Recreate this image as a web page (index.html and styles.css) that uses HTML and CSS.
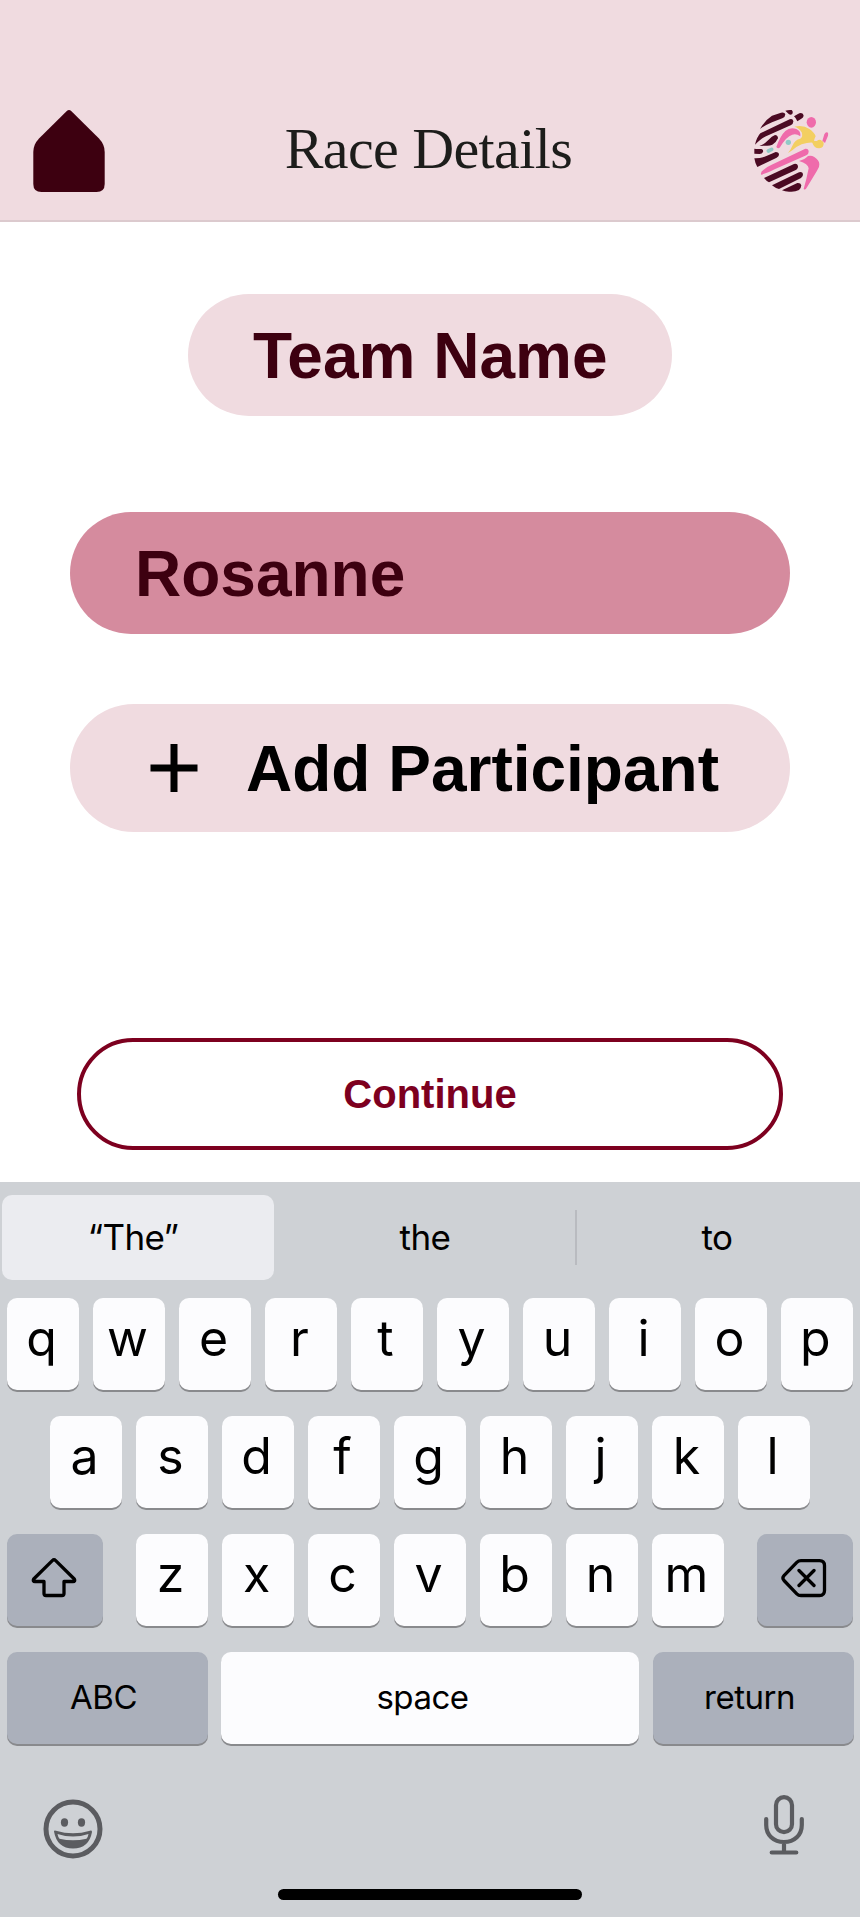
FILE: index.html
```html
<!DOCTYPE html>
<html lang="en">
<head>
<meta charset="utf-8">
<title>Race Details</title>
<link rel="stylesheet" href="styles.css">
</head>
<body>
<header class="header">
  <svg class="home" viewBox="0 0 72 82"><path d="M33.8 .9Q36 -.8 38.2 .9L66 28.500Q71.700 34.500 71.700 42V74Q71.700 82 63.500 82H8.500Q.3 82 .3 74V42Q.3 34.500 6 28.500Z" fill="#3d0010"/></svg>
  <h1 class="title">Race Details</h1>
  <svg class="logo" viewBox="66 54 234 258">
    <g fill="#4b0a23">
      <path d="M166 62Q175 59 185 60Q191 66 186 73Q179 77 173 69Z"/>
      <path d="M90 117Q105 90 126 77L153 68Q164 66 166 73Q166 81 157 85L126 97Q105 106 90 117Z"/>
      <path d="M75 164Q80 142 91 130L179 88Q188 85 190 93Q191 101 182 106L108 139Q95 144 75 164Z"/>
      <path d="M192 79L208 70Q220 67 221 77Q220 83 214 86L202 94Q198 84 192 79Z"/>
      <path d="M88 168Q103 163 115 150Q126 138 135 135Q144 136 144 145Q139 157 127 164Q118 168 108 167Z"/>
      <path d="M73 176Q80 178 94 177Q101 179 99 186Q96 192 89 192L73 191Z"/>
      <path d="M73 205Q93 206 111 197L137 186Q147 186 147 194Q147 199 140 203L82 231Q75 219 73 205Z"/>
      <path d="M102 264L192 222Q202 220 204 228Q205 235 199 239L117 277Q109 273 102 264Z"/>
      <path d="M126 286L207 247Q217 244 219 252Q220 259 213 264L147 297Q135 294 126 286Z"/>
      <path d="M156 301L202 279Q212 278 214 286Q214 293 207 300Q194 307 177 305Q165 305 156 301Z"/>
    </g>
    <path d="M115 183L125 178" stroke="#91cac7" stroke-width="11" stroke-linecap="round"/>
    <circle cx="175" cy="157" r="8" fill="#91cac7"/>
    <g fill="#f3cf61">
      <path d="M193 110Q220 104 238 117Q254 128 257 139Q253 146 252 152Q256 154 261 153Q265 148 272 150Q279 153 281 158Q282 173 268 175Q253 176 247 158Q235 157 215 163Q200 169 187 181L174 189Q182 180 188 166Q194 149 211 146Q220 141 215 127Q207 113 193 110Z"/>
    </g>
    <g fill="#ef6bab">
      <ellipse cx="244" cy="97" rx="14" ry="16"/>
      <path d="M139 171Q151 137 166 123Q180 110 199 117Q213 123 211 139Q199 130 187 134Q169 139 150 172Q145 178 139 171Z"/>
      <path d="M93 254Q91 245 101 239Q113 229 125 224L226 176Q236 175 236 185Q236 192 229 196L134 238Q115 249 93 254Z"/>
      <path d="M207 213Q225 208 234 198Q244 195 253 201Q268 211 268 223Q269 232 261 242L231 292Q226 302 221 297Q230 266 236 235Q235 222 207 213Z"/>
      <path d="M277 153L283 133Q287 125 292 127Q296 130 294 137L285 159Q281 155 277 153Z"/>
    </g>
  </svg>
</header>
<main class="main">
  <div class="pill team">Team Name</div>
  <div class="pill member">Rosanne</div>
  <div class="pill add">
    <svg class="plus" viewBox="0 0 48 48"><path d="M24 0V48M.5 24H47.500" stroke="#000" stroke-width="7"/></svg>
    <span>Add Participant</span>
  </div>
  <div class="continue">Continue</div>
</main>
<section class="keyboard">
  <div class="suggestions">
    <div class="suggest active">“The”</div>
    <div class="suggest mid">the</div>
    <div class="divider"></div>
    <div class="suggest last">to</div>
  </div>
  <div class="row"><div class="key">q</div><div class="key">w</div><div class="key">e</div><div class="key">r</div><div class="key">t</div><div class="key">y</div><div class="key">u</div><div class="key">i</div><div class="key">o</div><div class="key">p</div></div>
  <div class="row"><div class="key">a</div><div class="key">s</div><div class="key">d</div><div class="key">f</div><div class="key">g</div><div class="key">h</div><div class="key">j</div><div class="key">k</div><div class="key">l</div></div>
  <div class="row spread">
    <div class="key dark side"><svg class="glyph" viewBox="0 0 46 40"><path d="M21.300 2.600Q23 1 24.700 2.600L43.300 21Q44.500 23.500 42 23.500H33V35.500Q33 37.500 31 37.500H15Q13 37.500 13 35.500V23.500H4Q1.500 23.500 2.700 21Z" fill="none" stroke="#000" stroke-width="3.300" stroke-linejoin="round"/></svg></div>
    <div class="letters"><div class="key">z</div><div class="key">x</div><div class="key">c</div><div class="key">v</div><div class="key">b</div><div class="key">n</div><div class="key">m</div></div>
    <div class="key dark side"><svg class="glyph" viewBox="0 0 46 40"><path d="M20 2.600H38.500Q43.500 2.600 43.500 7.600V32.500Q43.500 37.500 38.500 37.500H20Q17.500 37.500 15.800 35.800L3 22.500Q.8 20 3 17.600L15.800 4.300Q17.500 2.600 20 2.600ZM18 12.500L33 27.500M33 12.500L18 27.500" fill="none" stroke="#000" stroke-width="3.300" stroke-linecap="round" stroke-linejoin="round"/></svg></div>
  </div>
  <div class="row spread">
    <div class="key dark word wide">ABC</div>
    <div class="key word space">space</div>
    <div class="key dark word wide">return</div>
  </div>
  <div class="tools">
    <svg class="emoji" viewBox="0 0 60 60"><circle cx="30" cy="30" r="27" fill="none" stroke="#5b5c60" stroke-width="5"/><g fill="#5b5c60"><ellipse cx="21.500" cy="23.500" rx="3.600" ry="4.200"/><ellipse cx="38.500" cy="23.500" rx="3.600" ry="4.200"/><path fill-rule="evenodd" d="M11 32.500Q11 31 13 31.700Q30 37 47 31.700Q49 31 49 33Q46 49.500 30 49.500Q14 49.500 11 32.500ZM14.500 35Q15 38 16.500 39.700Q30 43 43.500 39.700Q45 38 45.500 35Q30 40 14.500 35Z"/></g></svg>
    <svg class="mic" viewBox="0 0 40 60"><g fill="none" stroke="#5b5c60" stroke-width="4.200" stroke-linecap="round"><rect x="12" y="2.200" width="16" height="35" rx="8"/><path d="M2.200 24V30C2.200 40 9.500 47 20 47S37.800 40 37.800 30V24M20 47V57M7.700 57.500H32.300"/></g></svg>
  </div>
  <div class="indicator"></div>
</section>
</body>
</html>
```
FILE: styles.css
```css
* { box-sizing: border-box; }
body {
  margin: 0;
  width: 860px;
  height: 1918px;
  background: #fff;
  font-family: "Liberation Sans", Arial, sans-serif;
  overflow: hidden;
}
svg { display: block; flex: none; }
.header {
  height: 222px;
  padding: 108px 30px 0 33px;
  display: flex;
  justify-content: space-between;
  align-items: flex-start;
  background: #f0dbe0;
  border-bottom: 2px solid #dccace;
}
.home { width: 72px; height: 82px; margin-top: 2px; }
.title {
  margin: 0;
  padding-left: 0;
  font: 400 58px/82px "Liberation Serif", serif;
  letter-spacing: -.6px;
  color: #1d1d1b;
  white-space: nowrap;
}
.logo { width: 78px; height: 86px; }
.main {
  height: 960px;
  padding-top: 72px;
  display: flex;
  flex-direction: column;
  align-items: center;
}
.pill {
  height: 122px;
  padding: 2px 0 0 65px;
  display: flex;
  align-items: center;
  border-radius: 62px;
  background: #f0dbe0;
  color: #3d0010;
  font-size: 64px;
  font-weight: 700;
  white-space: nowrap;
}
.team { width: 484px; }
.member { width: 720px; margin-top: 96px; background: #d58b9e; }
.add {
  width: 720px;
  height: 128px;
  margin-top: 70px;
  padding-left: 80px;
  gap: 48px;
  border-radius: 64px;
  color: #000;
}
.plus { width: 48px; height: 48px; margin-top: -2px; }
.continue {
  width: 706px;
  height: 112px;
  margin-top: 206px;
  display: flex;
  align-items: center;
  justify-content: center;
  border: 4px solid #7d001f;
  border-radius: 56px;
  color: #7d001f;
  font-size: 40px;
  font-weight: 700;
}
.keyboard {
  height: 735px;
  padding: 13px 6.500px 0;
  background: #ced1d5;
  color: #000;
  font-family: Inter, sans-serif;
}
.suggestions {
  height: 85px;
  margin: 0 -4.500px 18px;
  display: flex;
  align-items: center;
}
.suggest {
  font-size: 35px;
  line-height: 84px;
  height: 85px;
  text-align: center;
  letter-spacing: -.6px;
}
.active { width: 272px; padding-right: 10px; background: #ebecf0; border-radius: 10px; }
.mid { width: 301px; padding-left: 1px; }
.divider { width: 2px; height: 55px; background: #b9bbc0; }
.last { width: 280px; }
.row {
  height: 94px;
  margin-bottom: 24px;
  display: flex;
  justify-content: center;
  gap: 13.200px;
}
.spread { justify-content: space-between; gap: 0; }
.letters { display: flex; gap: 13.200px; }
.key {
  width: 72.800px;
  height: 92px;
  border-radius: 10px;
  background: #fcfcfe;
  box-shadow: 0 2px 0 #898a8d;
  text-align: center;
  font-size: 50px;
  line-height: 80px;
  padding-right: 3px;
}
.dark { background: #abb0bb; }
.side {
  width: 96px;
  padding: 0 2px 0 0;
  display: flex;
  align-items: center;
  justify-content: center;
}
.glyph { width: 46px; height: 40px; margin-top: -4px; }
.word { font-size: 33px; line-height: 90px; padding: 0 7px 0 0; letter-spacing: -.5px; }
.wide { width: 201px; }
.space { width: 418px; padding-right: 15px; }
.tools {
  height: 116px;
  padding: 24px 50px 0 36.500px;
  display: flex;
  justify-content: space-between;
}
.emoji { width: 60px; height: 60px; margin-top: 4.500px; }
.mic { width: 40px; height: 60px; margin-top: 1px; }
.indicator {
  width: 304px;
  height: 11px;
  margin: 3px auto 0;
  border-radius: 6px;
  background: #000;
}
```
